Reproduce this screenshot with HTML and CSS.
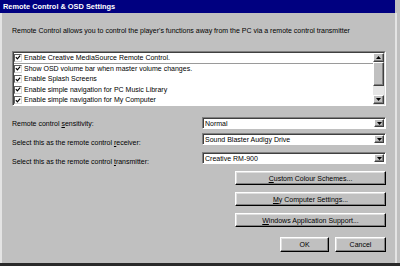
FILE: index.html
```html
<!DOCTYPE html>
<html>
<head>
<meta charset="utf-8">
<link rel="stylesheet" href="styles.css">
</head>
<body>
<div class="window">
  <div class="titlebar">Remote Control &amp; OSD Settings</div>
  <div class="client">
    <p class="desc">Remote Control allows you to control the player's functions away from the PC via a remote control transmitter</p>
    <div class="list">
      <div class="items">
        <div class="item focus"><span class="cb"><svg viewBox="0 0 7 7" width="7" height="7"><path d="M1 3 L2.8 5 L6 1.2" fill="none" stroke="#000" stroke-width="1.4"/></svg></span>Enable Creative MediaSource Remote Control.</div>
        <div class="item"><span class="cb"><svg viewBox="0 0 7 7" width="7" height="7"><path d="M1 3 L2.8 5 L6 1.2" fill="none" stroke="#000" stroke-width="1.4"/></svg></span>Show OSD volume bar when master volume changes.</div>
        <div class="item"><span class="cb"><svg viewBox="0 0 7 7" width="7" height="7"><path d="M1 3 L2.8 5 L6 1.2" fill="none" stroke="#000" stroke-width="1.4"/></svg></span>Enable Splash Screens</div>
        <div class="item"><span class="cb"><svg viewBox="0 0 7 7" width="7" height="7"><path d="M1 3 L2.8 5 L6 1.2" fill="none" stroke="#000" stroke-width="1.4"/></svg></span>Enable simple navigation for PC Music Library</div>
        <div class="item"><span class="cb"><svg viewBox="0 0 7 7" width="7" height="7"><path d="M1 3 L2.8 5 L6 1.2" fill="none" stroke="#000" stroke-width="1.4"/></svg></span>Enable simple navigation for My Computer</div>
      </div>
      <div class="scrollbar">
        <div class="sbtn"><svg viewBox="0 0 5 3" width="5" height="3"><path d="M2.5 0 L5 3 L0 3 Z" fill="#000"/></svg></div>
        <div class="thumb"></div>
        <div class="track"></div>
        <div class="sbtn"><svg viewBox="0 0 5 3" width="5" height="3"><path d="M0 0 L5 0 L2.5 3 Z" fill="#000"/></svg></div>
      </div>
    </div>
    <div class="settings">
      <div class="lbl r1">Remote control <u>s</u>ensitivity:</div>
      <div class="combo r1"><span class="val">Normal</span><span class="drop"><svg viewBox="0 0 5 3" width="5" height="3"><path d="M0 0 L5 0 L2.5 3 Z" fill="#000"/></svg></span></div>
      <div class="lbl r2">Select this as the remote control <u>r</u>eceiver:</div>
      <div class="combo r2"><span class="val">Sound Blaster Audigy Drive</span><span class="drop"><svg viewBox="0 0 5 3" width="5" height="3"><path d="M0 0 L5 0 L2.5 3 Z" fill="#000"/></svg></span></div>
      <div class="lbl r3">Select this as the remote control <u>t</u>ransmitter:</div>
      <div class="combo r3"><span class="val">Creative RM-900</span><span class="drop"><svg viewBox="0 0 5 3" width="5" height="3"><path d="M0 0 L5 0 L2.5 3 Z" fill="#000"/></svg></span></div>
    </div>
    <div class="actions">
      <div class="btn wide"><u>C</u>ustom Colour Schemes...</div>
      <div class="btn wide"><u>M</u>y Computer Settings...</div>
      <div class="btn wide"><u>W</u>indows Application Support...</div>
    </div>
    <div class="footer">
      <div class="btn ok">OK</div>
      <div class="btn cancel">Cancel</div>
    </div>
  </div>
</div>
</body>
</html>
```
FILE: styles.css
```css
html, body {
  margin: 0;
  padding: 0;
  background: #c0c0c0;
}
.window {
  width: 400px;
  height: 266px;
  box-sizing: border-box;
  background: #c0c0c0;
  border-bottom: 3px solid #2a2a2a;
  font-family: "Liberation Sans", Arial, sans-serif;
  font-size: 7px;
  color: #000;
  overflow: hidden;
}
.titlebar {
  height: 13px;
  margin-right: 5px;
  padding-left: 3px;
  background: #000080;
  color: #fff;
  font-weight: bold;
  font-size: 7.4px;
  line-height: 13px;
}
.client {
  height: 250px;
  box-sizing: border-box;
  margin-right: 3px;
  border-left: 2px solid #e4e4e4;
  border-right: 2px solid #e4e4e4;
  padding: 0 9px 0 10px;
  display: flex;
  flex-direction: column;
}
.desc {
  margin: 13px 0 0 0;
  line-height: 10px;
  height: 10px;
  white-space: nowrap;
}
u {
  text-decoration: underline;
  text-underline-offset: 1px;
}
.list {
  margin-top: 15px;
  height: 55px;
  box-sizing: border-box;
  border-top: 1px solid #808080;
  border-left: 1px solid #808080;
  border-right: 1px solid #fff;
  border-bottom: 1px solid #fff;
  display: flex;
}
.items {
  flex: 1;
  background: #fff;
  border-top: 1px solid #404040;
  border-left: 1px solid #404040;
  overflow: hidden;
}
.item {
  height: 10.5px;
  box-sizing: border-box;
  display: flex;
  align-items: center;
  white-space: nowrap;
  line-height: 10px;
}
.item.focus {
  border-bottom: 1px solid #9a9a9a;
}
.cb {
  width: 8px;
  height: 8px;
  box-sizing: border-box;
  border-top: 1px solid #606060;
  border-left: 1px solid #606060;
  border-right: 1px solid #d8d8d8;
  border-bottom: 1px solid #d8d8d8;
  background: #fff;
  margin: 0 2px 0 0;
  display: flex;
  align-items: center;
  justify-content: center;
}
.cb svg {
  display: block;
}
.scrollbar {
  width: 11px;
  display: flex;
  flex-direction: column;
  border-top: 1px solid #404040;
  background: #e6e6e6;
  border-right: 1px solid #dfdfdf;
  border-bottom: 1px solid #dfdfdf;
}
.sbtn, .thumb, .drop {
  background: #c0c0c0;
  box-sizing: border-box;
  border-top: 1px solid #fff;
  border-left: 1px solid #fff;
  border-right: 1px solid #404040;
  border-bottom: 1px solid #404040;
  box-shadow: inset -1px -1px 0 #808080;
}
.sbtn {
  height: 9px;
  display: flex;
  align-items: center;
  justify-content: center;
}
.sbtn svg, .drop svg {
  display: block;
}
.thumb {
  height: 24px;
}
.track {
  flex: 1;
}
.settings {
  margin-top: 11px;
  display: grid;
  grid-template-columns: 190px 1fr;
  grid-template-rows: 16px 19px 12px;
}
.lbl {
  line-height: 12px;
  white-space: nowrap;
}
.lbl.r1 { padding-top: 1px; }
.lbl.r2 { padding-top: 4px; }
.lbl.r3 { padding-top: 4px; }
.combo {
  height: 12px;
  box-sizing: border-box;
  background: #fff;
  border-top: 1px solid #808080;
  border-left: 1px solid #808080;
  border-right: 1px solid #fff;
  border-bottom: 1px solid #fff;
  box-shadow: inset 1px 1px 0 #404040;
  display: flex;
  align-items: stretch;
  padding: 1px 1px 1px 2px;
}
.val {
  flex: 1;
  line-height: 9px;
  white-space: nowrap;
}
.drop {
  width: 10px;
  display: flex;
  align-items: center;
  justify-content: center;
}
.actions {
  margin-top: 7px;
  display: flex;
  flex-direction: column;
  align-items: flex-end;
  gap: 7px;
}
.btn {
  box-sizing: border-box;
  background: #c0c0c0;
  border-top: 1px solid #fff;
  border-left: 1px solid #fff;
  border-right: 1px solid #000;
  border-bottom: 1px solid #000;
  box-shadow: inset -1px -1px 0 #808080, inset 1px 1px 0 #dfdfdf;
  display: flex;
  align-items: center;
  justify-content: center;
  white-space: nowrap;
}
.btn.wide {
  width: 151px;
  height: 14px;
}
.footer {
  margin-top: 10px;
  display: flex;
  justify-content: flex-end;
  gap: 6px;
}
.btn.ok {
  width: 49px;
  height: 15px;
}
.btn.cancel {
  width: 51px;
  height: 15px;
}
```
